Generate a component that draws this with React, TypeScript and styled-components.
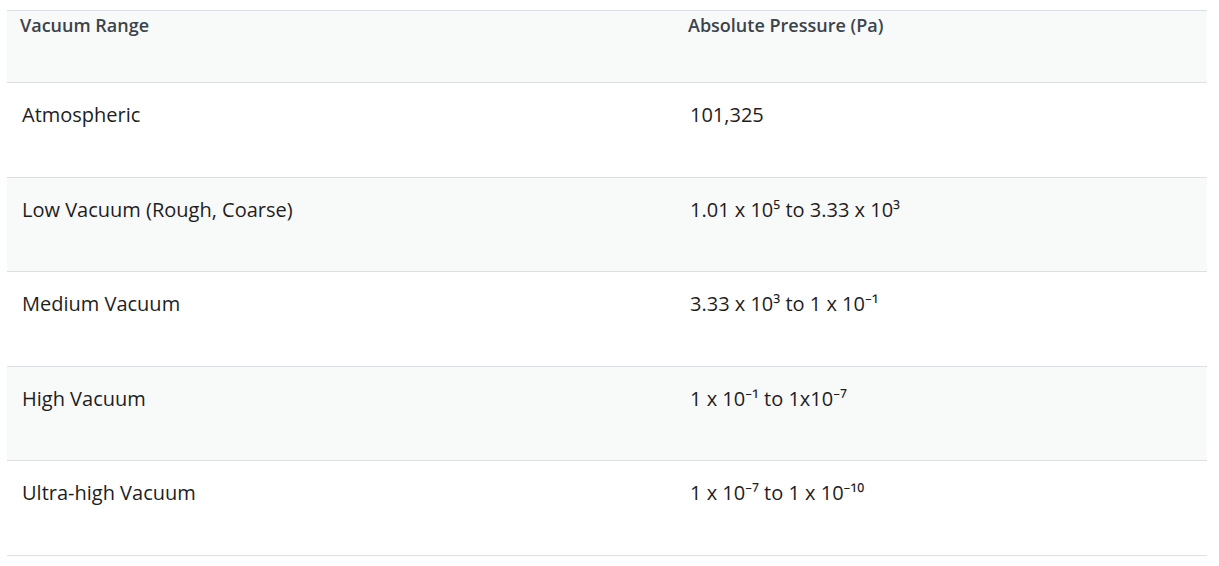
import React from "react";
import styled, { createGlobalStyle } from "styled-components";

const Global = createGlobalStyle`
  html, body { margin: 0; padding: 0; background: #ffffff; }
  body { font-family: "Open Sans", "Noto Sans", sans-serif; }
`;

const Wrap = styled.div`
  padding: 10px 12px 0 7px;
`;

const Table = styled.table`
  width: 1200px;
  border-collapse: collapse;
  table-layout: fixed;
`;

const HeadRow = styled.tr`
  background: #f8f9f9;
  border-top: 1px solid #dde0e2;
  border-bottom: 1px solid #dde0e2;
`;

const Th = styled.th<{ $w?: string }>`
  width: ${(p) => p.$w || "auto"};
  height: 72px;
  box-sizing: border-box;
  padding: 2px 13px 0;
  vertical-align: top;
  text-align: left;
  font-size: 18px;
  font-weight: 600;
  line-height: 24px;
  color: #3c434a;
`;

const Row = styled.tr<{ $shade: boolean }>`
  background: ${(p) => (p.$shade ? "#f8f9f9" : "#ffffff")};
  border-bottom: 1px solid #dde0e2;
`;

const Td = styled.td`
  height: 94.6px;
  box-sizing: border-box;
  padding: 17px 15px 0;
  vertical-align: top;
  font-size: 20px;
  line-height: 30px;
  color: #1e1e1e;
`;

const rows: [string, string][] = [
  ["Atmospheric", "101,325"],
  ["Low Vacuum (Rough, Coarse)", "1.01 x 10⁵ to 3.33 x 10³"],
  ["Medium Vacuum", "3.33 x 10³ to 1 x 10⁻¹"],
  ["High Vacuum", "1 x 10⁻¹ to 1x10⁻⁷"],
  ["Ultra-high Vacuum", "1 x 10⁻⁷ to 1 x 10⁻¹⁰"],
];

export default function App() {
  return (
    <>
      <Global />
      <Wrap>
        <Table>
          <thead>
            <HeadRow>
              <Th $w="668px">Vacuum Range</Th>
              <Th>Absolute Pressure (Pa)</Th>
            </HeadRow>
          </thead>
          <tbody>
            {rows.map(([a, b], i) => (
              <Row key={a} $shade={i % 2 === 1}>
                <Td>{a}</Td>
                <Td>{b}</Td>
              </Row>
            ))}
          </tbody>
        </Table>
      </Wrap>
    </>
  );
}
